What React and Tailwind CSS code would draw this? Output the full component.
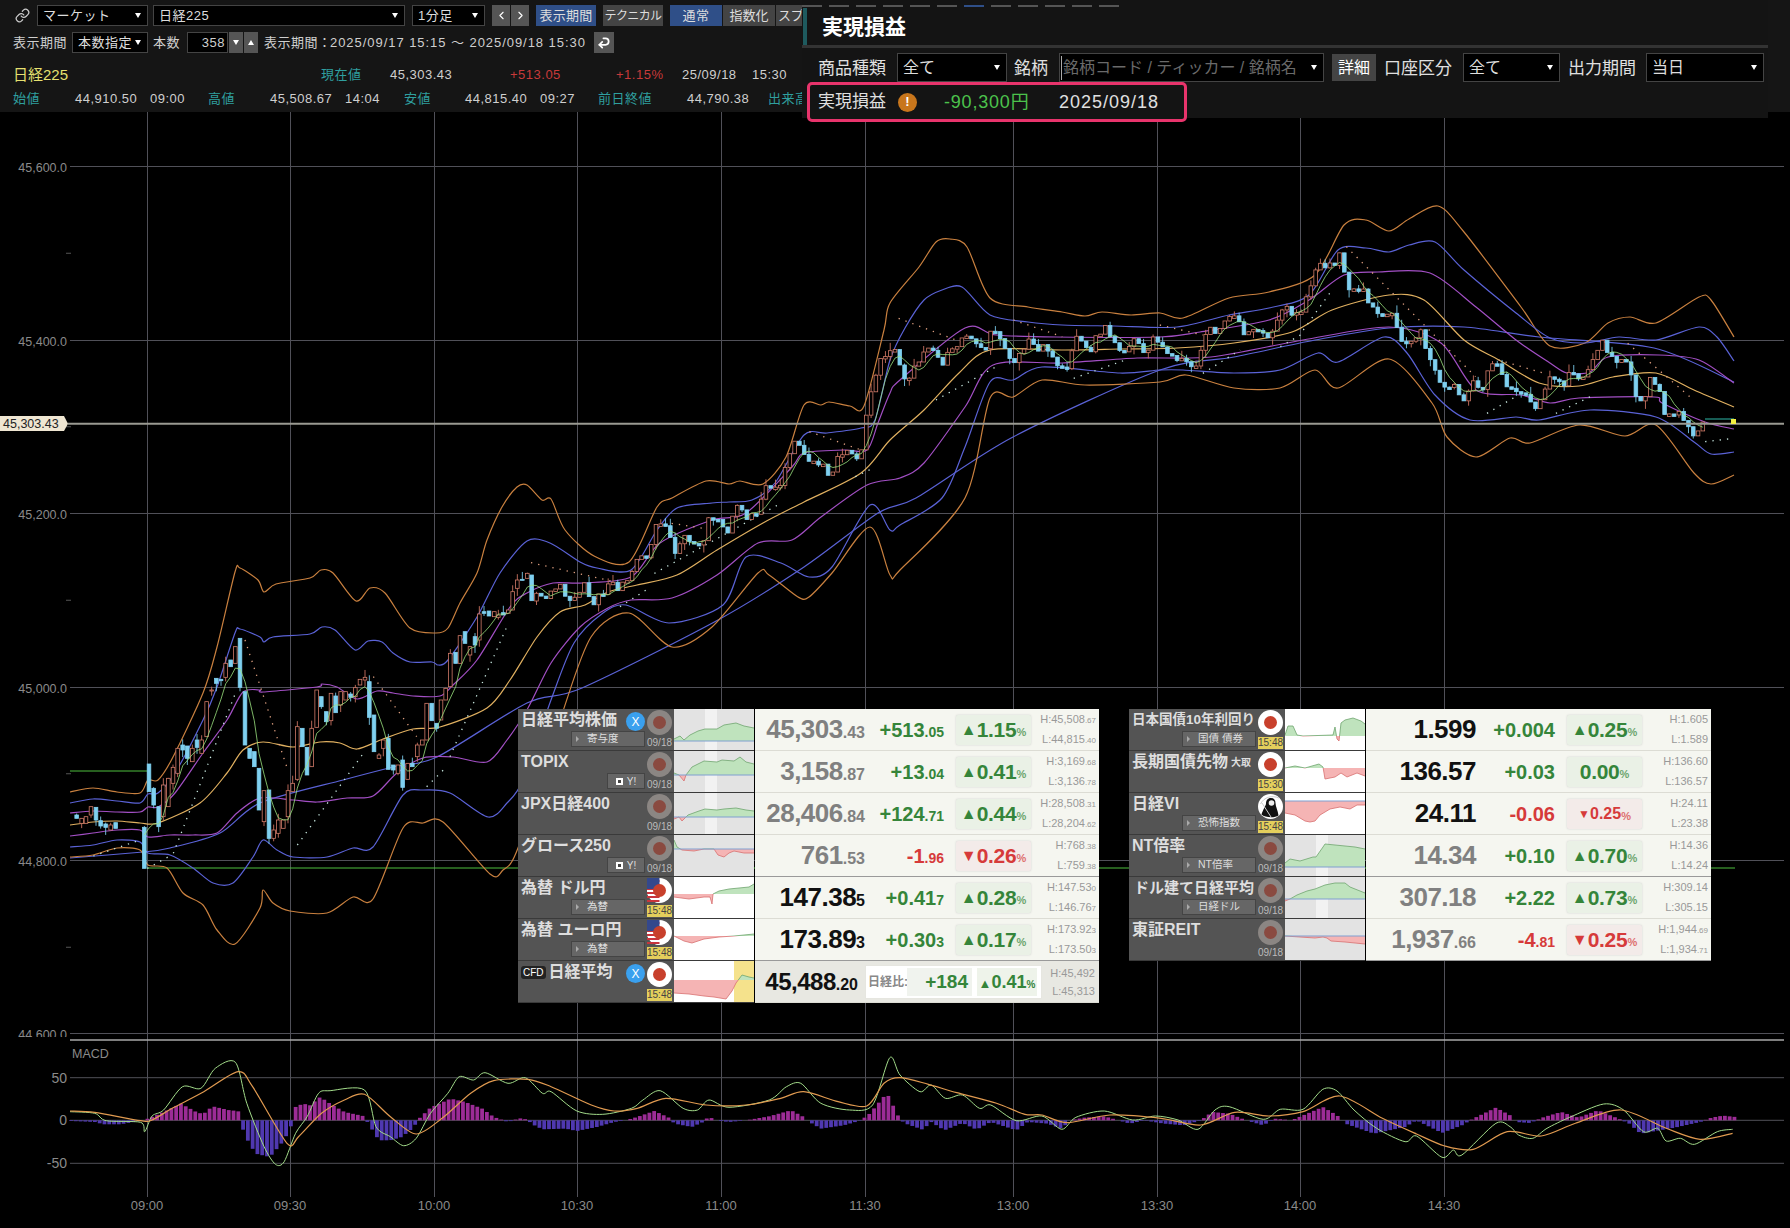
import React from "react";
import { Link, Undo2, ChevronLeft, ChevronRight } from "lucide-react";

const z8 = (x, y) => [60 + x / 3, 540 + y / 3];
const z6 = (x, y) => [x / 1.742, 280 + y / 3];
const z7 = (x, y) => [890 + x / 1.742, 200 + y / 3];
const z5 = (x, y) => [x / 1.742, 1030 + y / 3];
const z9 = (x, y) => [900 + x / 1.762, 1030 + y / 3];

const parse = (s) => s.trim().split(/\s+/).map((a) => a.split(",").map(Number));
const smooth = (p) => {
  let d = `M${p[0][0].toFixed(1)} ${p[0][1].toFixed(1)}`;
  for (let i = 0; i < p.length - 1; i++) {
    const a = p[i - 1] || p[i], b = p[i], c = p[i + 1], e = p[i + 2] || c;
    d += `C${(b[0] + (c[0] - a[0]) / 7).toFixed(1)} ${(b[1] + (c[1] - a[1]) / 7).toFixed(1)} ${(c[0] - (e[0] - b[0]) / 7).toFixed(1)} ${(c[1] - (e[1] - b[1]) / 7).toFixed(1)} ${c[0].toFixed(1)} ${c[1].toFixed(1)}`;
  }
  return d;
};
const interp = (pts, x) => {
  if (x <= pts[0][0]) return pts[0][1];
  for (let i = 0; i < pts.length - 1; i++) {
    if (x <= pts[i + 1][0]) {
      const t = (x - pts[i][0]) / (pts[i + 1][0] - pts[i][0] || 1);
      return pts[i][1] + t * (pts[i + 1][1] - pts[i][1]);
    }
  }
  return pts[pts.length - 1][1];
};
let seed = 12345;
const rnd = () => {
  seed = (seed * 1664525 + 1013904223) % 4294967296;
  return seed / 4294967296;
};

const U3 = "70,792 93,788 117,792 140,793 148,780 158,780 173,757 203,693 217,647 235,572 240,568 258,580 264,592 276,584 310,578 321,570 333,573 356,601 370,588 385,593 410,628 436,633 448,628 460,603 477,573 487,540 502,507 517,487 527,485 542,500 551,499 565,530 594,556 629,562 657,507 672,498 706,481 729,484 740,481 763,484 786,457 804,405 821,405 829,402 850,406 864,406 884,330 890,303 919,267 936,242 950,239 967,247 990,298 1028,307 1062,312 1085,316 1102,312 1131,315 1160,313 1183,318 1229,298 1269,292 1315,275 1344,225 1366,220 1389,231 1409,219 1438,206 1464,232 1521,307 1550,346 1585,343 1608,323 1630,317 1656,323 1699,297 1711,300 1734,337";
const U2 = "70,803 93,799 117,801 140,803 148,794 158,793 175,773 203,720 217,687 235,633 240,629 260,637 264,642 273,637 310,634 322,627 335,630 355,650 368,641 382,642 393,653 410,662 432,662 438,665 448,660 477,617 500,573 527,541 550,543 580,562 597,568 631,570 657,530 677,508 712,503 729,502 752,500 775,483 804,435 827,433 861,428 875,420 890,360 905,328 924,300 942,290 962,287 990,315 1028,322 1062,325 1114,326 1177,327 1229,315 1269,308 1309,295 1338,250 1366,248 1389,252 1409,245 1435,242 1464,270 1516,313 1550,338 1585,343 1619,337 1656,340 1699,327 1717,337 1734,361";
const U1 = "70,813 93,811 117,812 140,812 148,807 158,807 175,793 203,753 227,720 243,692 260,690 263,692 317,687 322,684 337,687 357,699 377,691 393,693 413,696 440,696 453,685 477,660 510,607 527,593 553,583 582,583 631,577 660,543 712,520 746,513 792,467 804,453 844,450 867,450 878,423 890,393 900,380 965,328 996,335 1056,337 1160,337 1200,332 1269,320 1309,300 1344,275 1378,272 1430,273 1476,307 1516,340 1550,363 1567,373 1590,372 1608,357 1659,355 1699,360 1734,383";
const MID = "70,825 93,822 117,821 140,823 158,823 200,803 227,773 243,750 263,742 293,747 320,742 340,743 357,749 383,739 413,729 440,727 487,708 510,680 537,637 560,612 585,605 608,592 637,585 677,575 717,550 763,523 804,502 861,473 890,440 924,410 959,373 990,350 1062,350 1120,349 1177,348 1234,343 1292,332 1332,310 1389,295 1424,300 1464,340 1499,360 1539,383 1579,386 1613,377 1656,373 1694,390 1734,407";
const L1 = "70,836 93,833 117,830 140,830 148,837 170,835 193,835 217,833 237,813 260,798 293,800 317,802 347,798 373,796 397,773 423,758 453,757 487,762 507,740 528,708 551,663 580,627 608,608 631,600 672,598 717,575 758,543 792,540 821,517 867,485 900,478 924,463 965,407 993,365 1062,363 1137,358 1211,357 1303,340 1389,327 1441,343 1476,390 1521,395 1550,403 1579,398 1654,397 1662,403 1705,422 1734,429";
const L2 = "70,847 93,845 117,840 140,842 148,853 170,855 193,868 213,883 233,883 253,857 263,840 277,850 293,857 327,857 353,848 373,847 403,795 423,790 450,793 488,817 507,803 523,780 551,700 574,643 603,613 626,605 669,623 723,605 746,557 781,563 809,577 832,567 870,505 890,530 900,525 942,498 965,447 990,382 1013,380 1042,367 1120,373 1160,370 1183,370 1234,373 1280,370 1318,353 1338,362 1384,337 1407,353 1435,395 1470,420 1516,417 1539,420 1590,410 1656,417 1694,442 1711,454 1734,452";
const L3 = "70,857 93,855 117,848 140,850 148,865 167,868 183,893 203,905 217,930 235,944 260,908 263,890 273,903 290,911 327,913 353,897 373,899 403,828 423,823 443,822 490,874 503,870 518,848 560,720 591,637 629,613 672,647 712,627 758,573 769,575 798,597 809,597 832,573 870,527 890,575 900,570 965,498 990,398 1013,397 1042,380 1085,385 1160,382 1186,375 1234,388 1280,388 1315,370 1338,388 1389,359 1432,403 1447,437 1476,457 1510,438 1530,443 1579,425 1625,436 1656,425 1694,473 1711,484 1734,475";
const SLOW = "70,858 143,852 170,848 220,833 260,803 343,780 393,767 437,757 527,703 582,688 718,620 804,567 878,513 916,498 1013,437 1160,370 1234,357 1315,340 1389,328 1464,327 1539,337 1654,348 1734,382";

const explicit = [[50,825,835,"d"],[65,835,850,"u"],[78,830,850,"u"],[93,800,825,"u"],[108,802,840,"d"],[122,842,858,"d"],[137,852,862,"d"],[152,855,870,"u"],[167,848,865,"d"],[253,862,985,"d"],[267,672,755,"d"],[281,745,795,"d"],[296,800,860,"d"],[310,735,830,"u"],[325,715,800,"u"],[339,682,730,"u"],[353,625,700,"u"],[368,615,630,"d"],[382,618,655,"d"],[397,625,665,"u"],[411,600,622,"d"],[425,600,640,"u"],[440,485,590,"u"],[455,450,453,"u"],[469,415,430,"d"],[483,418,422,"d"],[497,370,412,"u"],[512,360,380,"d"],[526,320,370,"u"],[540,295,442,"d"],[555,455,615,"d"],[569,625,655,"d"],[583,635,680,"d"],[597,685,810,"d"],[612,752,845,"u"],[627,750,895,"d"],[641,870,895,"u"],[655,840,880,"u"],[670,840,865,"u"],[684,752,830,"u"],[698,730,755,"u"],[712,560,718,"u"],[727,565,620,"d"],[741,622,705,"d"],[755,565,680,"u"],[770,450,562,"u"],[784,470,500,"d"],[799,515,545,"d"],[813,460,542,"u"],[827,468,518,"d"],[842,455,495,"u"],[857,455,480,"u"],[872,462,472,"d"],[886,443,470,"u"],[900,418,435,"u"],[915,412,420,"u"],[928,425,532,"d"],[942,525,635,"d"],[957,645,655,"u"],[970,600,625,"u"],[985,595,688,"d"],[1000,675,690,"d"],[1014,675,700,"u"],[1028,660,742,"d"],[1043,670,718,"u"],[1057,670,680,"d"],[1072,615,650,"u"],[1087,600,615,"u"],[1100,490,600,"u"],[1115,490,542,"d"],[1130,550,565,"d"],[1143,480,540,"u"],[1157,445,480,"u"],[1171,340,440,"u"],[1187,337,370,"d"],[1200,287,370,"u"],[1215,275,310,"d"],[1230,320,345,"u"],[1245,290,315,"d"],[1258,222,300,"u"],[1272,215,220,"d"],[1287,213,228,"d"],[1303,215,230,"u"],[1315,225,232,"u"],[1330,218,225,"d"],[1345,210,220,"u"],[1358,155,210,"u"],[1372,120,145,"u"],[1387,118,121,"d"],[1402,100,115,"u"],[1415,105,182,"d"]];

const closeKeys = [
  ...parse("532,601 543,595 554,590 574,595 585,593 603,595 623,577 631,573 640,557 649,550 657,525 666,532 676,545 692,547 712,522 726,525 738,508 746,517 758,505 769,487 778,483 795,445 803,447 815,467 832,465 861,447 873,393 881,347"),
  ...[[5,460],[20,520],[50,490],[75,420],[95,500],[115,420],[135,400],[150,460],[175,395],[195,430],[215,485],[250,420],[270,440],[295,510],[325,435],[345,425],[370,405],[410,445],[440,425],[475,440],[495,460],[512,490],[530,495],[545,430],[570,380],[595,345],[605,375],[640,400],[655,420],[680,330],[700,350],[715,330],[745,230],[755,170],[770,190],[785,190],[795,250],[820,280],[830,310],[850,340],[870,350],[890,400],[905,440],[925,415],[940,470],[955,530],[965,590],[985,540],[997,600],[1015,570],[1045,510],[1068,515],[1088,565],[1100,600],[1120,610],[1145,560],[1170,525],[1195,540],[1220,490],[1240,440],[1262,455],[1285,500],[1295,545],[1305,590],[1330,555],[1345,600],[1360,650],[1380,650],[1395,690],[1410,680],[1420,660]].map(([x, y]) => z7(x, y)),
];

const candles = [];
explicit.forEach(([x, t, b, dir]) => {
  const [rx, ry1] = z8(x, t);
  const ry2 = 540 + b / 3;
  candles.push({ x: rx, top: ry1, bot: ry2, up: dir === "u", close: dir === "u" ? ry1 : ry2 });
});
{
  let prev = interp(closeKeys, 532);
  let i = 0;
  for (let x = 536.5; x < 1706; x += 4.78) {
    const c = interp(closeKeys, x) + Math.sin(i * 1.15) * 6 + (rnd() - 0.5) * 11;
    const up = c < prev;
    let top = Math.min(c, prev), bot = Math.max(c, prev);
    if (bot - top < 2.5) bot = top + 2.5;
    candles.push({ x, top, bot, up, close: c });
    prev = c;
    i++;
  }
}
candles.forEach((c) => {
  c.wt = c.top - (rnd() < 0.45 ? rnd() * 8 : 0);
  c.wb = c.bot + (rnd() < 0.45 ? rnd() * 8 : 0);
});
const ma = candles.map((c, i) => {
  const s = candles.slice(Math.max(0, i - 4), i + 1);
  return [c.x, s.reduce((a, b) => a + b.close, 0) / s.length];
});

const sar = [
  ["w", z8(100, 948), z8(240, 900)], ["w", z8(262, 985), z8(335, 945)], ["w", z8(340, 940), z8(530, 450)], ["w", z8(712, 915), z8(910, 640)],
  ["o", z8(555, 300), z8(680, 680)], ["o", z8(940, 410), z8(1070, 590)], ["w", z8(1100, 740), z8(1160, 680)], ["w", z8(1170, 650), z8(1345, 250)],
  ["o", z6(925, 848), z6(1070, 905)], ["w", z6(1080, 980), z6(1130, 925)], ["w", z6(1140, 880), z6(1360, 670)], ["o", z6(1170, 730), z6(1225, 745)],
  ["o", z6(1410, 455), z6(1500, 510)], ["w", z6(1490, 590), z6(1520, 565)], ["o", z7(15, 355), z7(130, 430)], ["o", z7(215, 360), z7(300, 410)],
  ["w", z7(80, 600), z7(185, 500)], ["w", z7(320, 535), z7(410, 480)], ["o", z7(470, 375), z7(545, 405)], ["w", z7(545, 520), z7(610, 450)],
  ["w", z7(680, 440), z7(720, 400)], ["w", z7(720, 390), z7(770, 270)], ["o", z7(795, 140), z7(1020, 530)], ["o", z7(1060, 480), z7(1140, 520)],
  ["w", z7(1040, 640), z7(1090, 590)], ["w", z7(1160, 640), z7(1220, 590)], ["o", z7(1285, 430), z7(1400, 600)], ["w", z7(1420, 725), z7(1470, 715)],
];

const macdG = [
  ...[[122,245],[165,250],[185,272],[245,277],[252,305],[265,258],[285,240],[318,170],[350,175],[375,115],[410,97],[430,220],[460,350],[480,403],[495,395],[515,310],[535,260],[555,190],[575,182],[635,180],[655,290],[680,320],[703,347],[725,325],[750,250],[780,190],[800,140],[825,150],[845,128],[885,160],[915,143],[945,190],[960,185],[1005,243],[1050,253],[1100,235],[1120,210],[1150,182],[1190,235],[1215,240],[1235,210],[1270,232],[1340,210],[1370,170],[1395,160],[1430,220],[1480,240],[1520,225],[1550,83]].map(([x, y]) => z5(x, y)),
  ...[[0,135],[35,185],[55,165],[80,205],[110,195],[140,235],[160,225],[205,272],[250,258],[285,298],[310,262],[360,243],[410,270],[450,258],[490,270],[525,298],[555,240],[580,230],[640,268],[670,238],[710,238],[745,178],[770,183],[800,240],[840,295],[890,335],[910,318],[955,382],[975,360],[990,375],[1050,280],[1075,290],[1090,315],[1115,325],[1140,295],[1180,262],[1240,222],[1275,240],[1310,305],[1335,295],[1350,333],[1375,325],[1400,343],[1440,305],[1467,298]].map(([x, y]) => z9(x, y)),
];
const macdO = [
  ...[[122,243],[165,247],[245,272],[265,270],[300,235],[355,185],[415,125],[440,170],[500,340],[520,320],[560,250],[600,210],[635,193],[680,260],[725,312],[770,265],[820,190],[860,152],[920,148],[960,170],[1030,225],[1070,243],[1110,235],[1160,205],[1230,225],[1300,225],[1360,205],[1400,185],[1460,215],[1510,228],[1540,160]].map(([x, y]) => z5(x, y)),
  ...[[0,143],[50,163],[100,188],[170,220],[220,253],[250,255],[295,278],[370,255],[460,265],[530,285],[590,247],[650,258],[710,245],[775,198],[850,265],[910,312],[960,348],[1010,358],[1070,305],[1130,318],[1190,280],[1270,240],[1350,295],[1410,328],[1467,310]].map(([x, y]) => z9(x, y)),
];
const histKeys = [
  ...[[122,-2],[165,-5],[180,-12],[210,-12],[240,-3],[250,0],[265,10],[285,25],[315,50],[345,22],[355,20],[370,42],[400,30],[415,28],[418,-2],[428,-50],[445,-100],[470,-110],[490,-70],[505,-30],[515,40],[528,50],[540,45],[558,70],[575,50],[600,25],[635,12],[640,-5],[660,-60],[680,-60],[700,-50],[720,-22],[730,5],[750,38],[785,65],[810,55],[840,35],[860,10],[885,-5],[905,6],[920,2],[925,-10],[945,-27],[985,-25],[1005,-32],[1040,-20],[1070,-5],[1090,0],[1110,10],[1140,28],[1165,8],[1175,-10],[1205,-20],[1225,-5],[1235,12],[1245,0],[1270,-5],[1300,0],[1340,12],[1378,30],[1400,10],[1410,-5],[1430,-25],[1470,-15],[1500,0],[1515,20],[1545,82]].map(([x, v]) => [x / 1.742, v / 3]),
  ...[[0,2],[10,-10],[40,-28],[55,-5],[78,-30],[110,-8],[135,-28],[160,-5],[205,-30],[225,-5],[260,-10],[285,-25],[300,0],[325,8],[360,12],[385,0],[405,-10],[430,0],[465,-10],[500,-15],[530,0],[550,25],[580,20],[610,0],[640,-15],[660,5],[690,0],[745,40],[770,15],[785,-10],[835,-40],[890,-20],[910,0],[955,-38],[990,-15],[1010,5],[1050,38],[1075,15],[1085,-5],[1110,-8],[1135,10],[1165,25],[1195,8],[1230,30],[1270,2],[1285,-10],[1305,-40],[1365,-22],[1410,-5],[1430,8],[1450,14],[1472,10]].map(([x, v]) => [900 + x / 1.762, v / 3]),
];
const hist = [];
for (let x = 71; x < 1736; x += 4.78) hist.push([x, interp(histKeys, x)]);

const GRIDX = [147, 290, 434, 577, 721, 865, 1013, 1157, 1300, 1444];
const TIMES = ["09:00", "09:30", "10:00", "10:30", "11:00", "11:30", "13:00", "13:30", "14:00", "14:30"];
const PRICES = [["45,600.0", 166.5], ["45,400.0", 340.5], ["45,200.0", 513.5], ["45,000.0", 687.5], ["44,800.0", 860.5], ["44,600.0", 1033.5]];

function MainChart() {
  const axis = { fontFamily: '"Liberation Sans", sans-serif', fontSize: 12.5, fill: "#8a8a8a" };
  return (
    <svg viewBox="0 112 1790 1116" className="block w-[1790px] h-[1116px] bg-black">
      <g shapeRendering="crispEdges">
        {GRIDX.map((x) => (<line key={x} x1={x + 0.5} x2={x + 0.5} y1={112} y2={1197} stroke="#505058" />))}
      </g>
      {PRICES.map(([t, y]) => (
        <g key={t}>
          <line x1={70} x2={1784} y1={y} y2={y} stroke="#505058" shapeRendering="crispEdges" />
          <text x={67} y={y + 5} textAnchor="end" {...axis}>{t}</text>
        </g>
      ))}
      {Array.from({ length: 10 }).map((_, i) => {
        const y = 166.5 + 86.75 * i;
        return i % 2 === 1 ? <line key={i} x1={66} x2={71} y1={y} y2={y} stroke="#555" /> : null;
      })}
      <rect x={0} y={1037} width={70} height={191} fill="#000" />
      <line x1={70} x2={147} y1={771} y2={771} stroke="#4fbf3f" />
      <line x1={147} x2={1735} y1={868} y2={868} stroke="#4fbf3f" />
      {[[SLOW, "#5a62d6"], [L3, "#c9803f"], [U3, "#c9803f"], [L2, "#5a62d6"], [U2, "#5a62d6"], [L1, "#a24fc4"], [U1, "#a24fc4"], [MID, "#e0b060"]].map(([s, c], i) => (
        <path key={i} d={smooth(parse(s))} fill="none" stroke={c} strokeWidth={1.2} />
      ))}
      {sar.map(([k, a, b], i) => (
        <line key={i} x1={a[0]} y1={a[1]} x2={b[0]} y2={b[1]} stroke={k === "w" ? "#c8e8e0" : "#e0a080"} strokeWidth={1.3} strokeDasharray="1.3 6" />
      ))}
      {candles.map((c, i) => (
        <g key={i}>
          <line x1={c.x} x2={c.x} y1={c.wt} y2={c.wb} stroke={c.up ? "#c87060" : "#78c8e8"} strokeWidth={0.9} />
          <rect x={c.x - 1.8} y={c.top} width={3.6} height={c.bot - c.top} fill={c.up ? "#000" : "#7fd0f0"} stroke={c.up ? "#d07a68" : "#7fd0f0"} strokeWidth={0.8} />
        </g>
      ))}
      <path d={`M${ma.slice(9).map((p) => p[0].toFixed(1) + " " + p[1].toFixed(1)).join("L")}`} fill="none" stroke="#9be27f" strokeWidth={0.8} />
      <line x1={1705} x2={1734} y1={419} y2={419} stroke="#2fb8a8" />
      <line x1={68} x2={1784} y1={423.7} y2={423.7} stroke="#9a9a92" strokeWidth={2} />
      <rect x={1731} y={419} width={5} height={5} fill="#f4f040" />
      <polygon points="0,416 64,416 68,423.7 64,431 0,431" fill="#efe6d2" />
      <text x={3} y={428} fontFamily='"Liberation Sans", sans-serif' fontSize={12.5} fill="#222">45,303.43</text>

      <line x1={70} x2={1784} y1={1040} y2={1040} stroke="#a8a8a8" strokeWidth={1.5} />
      <text x={72} y={1058} {...axis}>MACD</text>
      {[["50", 1077.7], ["0", 1120.3], ["-50", 1163.3]].map(([t, y]) => (
        <g key={t}>
          <line x1={70} x2={1784} y1={y} y2={y} stroke="#505058" />
          <text x={67} y={y + 5} textAnchor="end" {...axis} fontSize={14}>{t}</text>
        </g>
      ))}
      {hist.map(([x, v], i) =>
        Math.abs(v) < 0.4 ? null : (
          <rect key={i} x={x - 1.9} y={v > 0 ? 1120.3 - v : 1120.3} width={3.8} height={Math.abs(v)} fill={v > 0 ? "#9c2c96" : "#4f38b0"} />
        )
      )}
      <path d={smooth(macdG)} fill="none" stroke="#a3dc8a" strokeWidth={1} />
      <path d={smooth(macdO)} fill="none" stroke="#e09a50" strokeWidth={1.2} />
      {TIMES.map((t, i) => (
        <text key={t} x={GRIDX[i]} y={1210} textAnchor="middle" {...axis} fontSize={13}>{t}</text>
      ))}
    </svg>
  );
}

function Caret({ className = "" }) {
  return <span className={`inline-block w-0 h-0 border-x-[3.5px] border-x-transparent border-t-[5px] border-t-white ${className}`} />;
}
function Sel({ w, text, cls = "h-[21px] text-[13px]", placeholder }) {
  return (
    <div className={`flex items-center justify-between bg-black border border-[#444] pl-[5px] pr-[6px] shrink-0 ${w} ${cls}`}>
      <span className={`truncate ${placeholder ? "text-[#6a6a6a] border-l border-[#aaa] pl-[1px] -ml-[4px]" : "text-[#ddd]"}`}>{text}</span>
      <Caret className="shrink-0" />
    </div>
  );
}
function Btn({ w, children, blue, cls = "text-[13px] tracking-[0.5px]" }) {
  return <div className={`flex items-center justify-center h-[21px] text-[#ddd] shrink-0 whitespace-nowrap ${w} ${cls} ${blue ? "bg-[#2f4f88]" : "bg-[#444]"}`}>{children}</div>;
}
function Cell({ w, c = "text-[#cfcfcf]", children }) {
  return <div className={`shrink-0 whitespace-nowrap ${w} ${c}`}>{children}</div>;
}

function Header() {
  const teal = "text-[#2f9f9f]";
  return (
    <div className="h-[112px] bg-[#151515] text-[13px] text-[#cfcfcf] tracking-[0.5px] pt-[5px]">
      <div className="flex items-center h-[21px] pl-[15px]">
        <Link size={15} className="text-[#ccc] w-[15px] mr-[7px] shrink-0" />
        <Sel w="w-[111px]" text="マーケット" />
        <div className="w-[5px]" />
        <Sel w="w-[252px]" text="日経225" />
        <div className="w-[7px]" />
        <Sel w="w-[73px]" text="1分足" />
        <div className="w-[7px]" />
        <div className="flex gap-[1px] shrink-0">
          <div className="w-[18px] h-[21px] bg-[#555] flex items-center justify-center"><ChevronLeft size={13} className="text-white" /></div>
          <div className="w-[18px] h-[21px] bg-[#555] flex items-center justify-center"><ChevronRight size={13} className="text-white" /></div>
        </div>
        <div className="w-[7px]" />
        <Btn w="w-[60px]" blue cls="text-[13px] tracking-[0.2px]">表示期間</Btn>
        <div className="w-[7px]" />
        <Btn w="w-[60px]" cls="text-[12px] tracking-[-0.6px]">テクニカル</Btn>
        <div className="w-[7px]" />
        <Btn w="w-[52px]" blue>通常</Btn>
        <div className="w-[1px]" />
        <Btn w="w-[52px]" cls="text-[13px] tracking-normal">指数化</Btn>
        <div className="w-[1px]" />
        <Btn w="w-[70px]" cls="text-[13px] tracking-[-0.5px] justify-start! pl-[2px]">スプレッド</Btn>
      </div>
      <div className="flex items-center h-[21px] mt-[6px] pl-[13px] whitespace-nowrap">
        <Cell w="w-[59px]">表示期間</Cell>
        <Sel w="w-[76px]" text="本数指定" />
        <Cell w="w-[39px] pl-[5px]">本数</Cell>
        <div className="w-[41px] h-[21px] bg-black border border-[#444] text-right pr-[2px] leading-[19px] shrink-0">358</div>
        <div className="w-[14px] h-[21px] bg-[#555] ml-[1px] flex items-center justify-center shrink-0"><Caret /></div>
        <div className="w-[14px] h-[21px] bg-[#555] ml-[1px] flex items-center justify-center shrink-0"><Caret className="rotate-180" /></div>
        <Cell w="w-[72px] pl-[6px]">表示期間：</Cell>
        <Cell w="w-[264px]" c="text-[#cfcfcf] tracking-[0.95px]">2025/09/17 15:15 ～ 2025/09/18 15:30</Cell>
        <div className="w-[20px] h-[21px] bg-[#555] flex items-center justify-center shrink-0"><Undo2 size={14} strokeWidth={3} className="text-white rotate-180 -scale-x-100" /></div>
      </div>
      <div className="flex items-center h-[20px] mt-[12px] pl-[13px]">
        <Cell w="w-[308px]" c="text-[#e6e070] text-[15px] tracking-normal">日経225</Cell>
        <Cell w="w-[69px]" c={teal}>現在値</Cell>
        <Cell w="w-[120px]">45,303.43</Cell>
        <Cell w="w-[106px]" c="text-[#c83a3a]">+513.05</Cell>
        <Cell w="w-[66px]" c="text-[#c83a3a]">+1.15%</Cell>
        <Cell w="w-[70px]">25/09/18</Cell>
        <Cell w="w-[40px]">15:30</Cell>
      </div>
      <div className="flex items-center h-[20px] mt-[4px] pl-[13px]">
        <Cell w="w-[62px]" c={teal}>始値</Cell>
        <Cell w="w-[75px]">44,910.50</Cell>
        <Cell w="w-[58px]">09:00</Cell>
        <Cell w="w-[62px]" c={teal}>高値</Cell>
        <Cell w="w-[75px]">45,508.67</Cell>
        <Cell w="w-[59px]">14:04</Cell>
        <Cell w="w-[61px]" c={teal}>安値</Cell>
        <Cell w="w-[75px]">44,815.40</Cell>
        <Cell w="w-[58px]">09:27</Cell>
        <Cell w="w-[89px]" c={teal}>前日終値</Cell>
        <Cell w="w-[81px]">44,790.38</Cell>
        <Cell w="w-[40px]" c={teal}>出来高</Cell>
      </div>
    </div>
  );
}

function PLPanel() {
  const big = "h-[29px] text-[16px]";
  const Lab = ({ w, ml, children }) => <div className={`shrink-0 whitespace-nowrap text-[17px] text-[#e0e0e0] pt-[3px] ${w} ${ml}`}>{children}</div>;
  return (
    <div className="absolute top-0 left-[802px] w-[966px] h-[118px] bg-[#141414]">
      <div className="absolute top-[5px] left-0 flex gap-[7px]">
        {Array.from({ length: 13 }).map((_, i) => (
          <div key={i} className={`w-[20px] h-[1.5px] ${i === 6 ? "bg-[#2f4f88]" : i === 11 ? "hidden" : "bg-[#555]"}`} />
        ))}
      </div>
      <div className="absolute left-[1px] top-[8px] w-[4px] h-[37px] bg-[#1e5a5e]" />
      <div className="h-[48px] pl-[20px] pt-[12px] border-b-[3px] border-[#333] text-[21px] leading-[30px] font-bold text-white">実現損益</div>
      <div className="flex items-center mt-[5px] h-[29px]">
        <Lab w="w-[71px]" ml="ml-[16px]">商品種類</Lab>
        <div className="w-[8px]" />
        <Sel w="w-[110px]" text="全て" cls={big} />
        <Lab w="w-[36px]" ml="ml-[7px]">銘柄</Lab>
        <div className="w-[9px]" />
        <Sel w="w-[265px]" text="銘柄コード / ティッカー / 銘柄名" placeholder cls="h-[29px] text-[16px]" />
        <div className="ml-[8px] w-[44px] h-[27px] bg-[#444] text-[16px] text-white flex items-center justify-center shrink-0">詳細</div>
        <Lab w="w-[71px]" ml="ml-[8px]">口座区分</Lab>
        <div className="w-[8px]" />
        <Sel w="w-[97px]" text="全て" cls={big} />
        <Lab w="w-[70px]" ml="ml-[8px]">出力期間</Lab>
        <div className="w-[8px]" />
        <Sel w="w-[118px]" text="当日" cls={big} />
      </div>
      <div className="flex items-center ml-[5px] w-[380px] h-[40px] border-[3px] border-[#e8346c] rounded-[5px] bg-[#141414] pl-[8px] text-[#e0e0e0]">
        <div className="w-[80px] text-[17px] shrink-0">実現損益</div>
        <div className="w-[19px] h-[19px] rounded-full bg-[#c8761c] text-white text-[13px] font-bold flex items-center justify-center shrink-0">!</div>
        <div className="ml-[27px] w-[115px] text-[18px] tracking-[0.8px] text-[#4cc24c] shrink-0 whitespace-nowrap">-90,300円</div>
        <div className="text-[18px] tracking-[1px] whitespace-nowrap">2025/09/18</div>
      </div>
    </div>
  );
}

function Marker({ kind, id }) {
  if (kind === "flag") {
    return (
      <svg viewBox="0 0 25 25" className="w-[25px] h-[25px] block">
        <defs><clipPath id={`${id}f`}><rect x="0" y="0" width="12.5" height="25" /></clipPath></defs>
        <circle cx="12.5" cy="12.5" r="12.5" fill="#fff" />
        <g clipPath={`url(#${id}f)`}>
          <circle cx="12.5" cy="12.5" r="12.5" fill="#fff" />
          {[2, 6, 10, 14, 18, 22].map((y) => (<rect key={y} x="0" y={y} width="13" height="2" fill="#c8343c" />))}
          <rect x="0" y="0" width="13" height="11" fill="#34488c" />
        </g>
        <circle cx="12.5" cy="12.5" r="6.5" fill="#c8402c" />
      </svg>
    );
  }
  if (kind === "reaper") {
    return (
      <svg viewBox="0 0 25 25" className="w-[25px] h-[25px] block">
        <circle cx="12.5" cy="12.5" r="12.5" fill="#fff" />
        <path d="M13 4c-3.5 0-5 2.5-5 5.5 0 2-3.5 7-4.5 11 3 3 13 4 17 1-.5-5-3-9-3-12.5C17.500 6 16 4 13 4z" fill="#111" />
        <circle cx="13.500" cy="9" r="2.800" fill="#eee" />
        <path d="M2.500 10C6 3 14 1 21 4M4 9l9 14" stroke="#ccc" strokeWidth="1" fill="none" />
      </svg>
    );
  }
  const live = kind === "live";
  return (
    <div className={`w-[25px] h-[25px] rounded-full flex items-center justify-center ${live ? "bg-white" : "bg-[#8b8683]"}`}>
      <div className={`w-[13px] h-[13px] rounded-full ${live ? "bg-[#c8402c]" : "bg-[#8a4a40]"}`} />
    </div>
  );
}

function Spark({ id, live, base, pts, band, lunch }) {
  const p = pts.map((a) => a.join(",")).join(" ");
  const area = `0,${base} ${p} 80,${base}`;
  return (
    <svg viewBox="0 0 80 41" className={`block w-[80px] h-[41px] shrink-0 ${live ? "bg-white" : "bg-[#e3e3e3]"}`}>
      <defs>
        <clipPath id={`${id}a`}><rect x="0" y="0" width="80" height={base} /></clipPath>
        <clipPath id={`${id}b`}><rect x="0" y={base} width="80" height={41 - base} /></clipPath>
      </defs>
      {band && <rect x="60" y="0" width="20" height="41" fill="#f5e28c" />}
      {lunch && <rect x="31" y="0" width="12" height="41" fill="#f2f2f2" />}
      <polygon points={area} fill="#bfe3bd" clipPath={`url(#${id}a)`} />
      <polygon points={area} fill="#f5b4b4" clipPath={`url(#${id}b)`} />
      <polyline points={p} fill="none" stroke="#6fa46f" strokeWidth="0.8" clipPath={`url(#${id}a)`} />
      <polyline points={p} fill="none" stroke="#d87070" strokeWidth="0.8" clipPath={`url(#${id}b)`} />
      {!live && <line x1="0" x2="80" y1={base} y2={base} stroke="#7f9fd0" strokeWidth="1" />}
      {live && base < 10 && <line x1="0" x2="80" y1={base} y2={base} stroke="#7f9fd0" strokeWidth="1" />}
    </svg>
  );
}

const sp = (s) => parse(s);

function NameButton({ label, y }) {
  if (y) {
    return (
      <div className="self-end mr-[2px] w-[38px] h-[16px] bg-[#666] border border-[#444] flex items-center justify-center gap-[4px] text-[10px] text-[#ddd]">
        <span className="w-[7px] h-[7px] bg-white flex items-center justify-center"><span className="w-[3px] h-[3px] bg-[#444]" /></span>Y!
      </div>
    );
  }
  return (
    <div className="self-end mr-[2px] w-[74px] h-[16px] bg-[#666] border border-[#444] flex items-center text-[10.5px] text-[#ddd] pl-[4px] gap-[8px] whitespace-nowrap">
      <span className="w-0 h-0 border-y-[3px] border-y-transparent border-l-[3px] border-l-[#aaa]" />{label}
    </div>
  );
}

function Split({ a, b, m, s, c }) {
  return (
    <span className={c}>
      <span className={m}>{a}</span>
      <span className={s}>{b}</span>
    </span>
  );
}

function Row({ r, i, id }) {
  const green = "text-[#35853a]", red = "text-[#d63a3a]";
  const col = r.down ? red : green;
  const priceCol = r.live ? "text-[#111]" : "text-[#808080]";
  return (
    <div className="flex h-[42px]">
      <div className="flex w-[156px] h-[42px] bg-[#545454] border-b border-[#3a3a3a] shrink-0">
        <div className="flex-1 min-w-0 flex flex-col justify-between pb-[3px] pl-[3px] pt-[1px] relative">
          <div className={`flex items-center whitespace-nowrap font-bold text-[#dedede] h-[20px] ${r.nameCls || "text-[16px]"}`}>
            {r.cfd && <span className="bg-[#222] text-white text-[10px] rounded-[3px] px-[2px] mr-[3px] leading-[13px] font-normal">CFD</span>}
            {r.name}
            {r.sub && <span className="text-[10px] ml-[3px]">{r.sub}</span>}
          </div>
          {r.x && (
            <div className="absolute right-[2px] top-[3px] w-[19px] h-[19px] rounded-full bg-[#3aa0ee] text-white text-[12px] flex items-center justify-center">X</div>
          )}
          {r.btn && <NameButton label={r.btn} />}
          {r.y && <NameButton y />}
        </div>
        <div className="w-[25px] mr-[2px] pt-[1px] flex flex-col items-center shrink-0">
          <Marker kind={r.marker} id={id} />
          <div className={`mt-[2px] w-[25px] text-center text-[10px] leading-[12px] ${r.live ? "bg-[#e4cf5c] text-[#444]" : "text-[#bbb]"}`}>{r.date}</div>
        </div>
      </div>
      <div className="border-b border-[#3a3a3a] h-[42px] shrink-0">
        <Spark id={id} live={r.live} base={r.base} pts={sp(r.pts)} band={r.band} lunch={r.lunch} />
      </div>
      <div className={`flex-1 flex items-center ml-[1px] border-b ${i === 3 || i === 5 ? "border-[#9a9a9a]" : "border-[#dcdcd4]"} ${r.cfd ? "bg-[#e8e8e2]" : "bg-[#f5f6f0]"}`}>
        {r.cfd ? (
          <>
            <div className="w-[103px] text-right shrink-0 font-bold whitespace-nowrap"><Split a="45,488" b=".20" m="text-[24px] tracking-[-0.5px] text-[#111]" s="text-[16px] text-[#111]" /></div>
            <div className="ml-[7px] w-[177px] h-[34px] bg-white border border-[#e6e6e0] flex items-center shrink-0">
              <span className="text-[12px] text-[#888] pl-[2px] w-[41px] whitespace-nowrap font-bold">日経比:</span>
              <span className={`w-[65px] h-[28px] bg-[#f0f3ee] text-right pr-[4px] font-bold text-[19px] leading-[28px] ${green}`}>+184</span>
              <span className={`ml-[5px] w-[60px] h-[28px] bg-[#eef3ea] font-bold text-[18px] leading-[28px] text-center whitespace-nowrap ${green}`}><span className="text-[13px]">▲</span>0.41<span className="text-[10px]">%</span></span>
            </div>
            <div className="flex-1 text-right pr-[4px] text-[11px] text-[#999] leading-[12px] flex flex-col gap-[6px]">
              <span>H:45,492</span><span>L:45,313</span>
            </div>
          </>
        ) : (
          <>
            <div className="w-[110px] text-right shrink-0 font-bold whitespace-nowrap"><Split a={r.p[0]} b={r.p[1]} m={`text-[26px] tracking-[-0.5px] ${priceCol}`} s={`text-[16px] ${priceCol}`} /></div>
            <div className="w-[79px] text-right shrink-0 font-bold whitespace-nowrap"><Split a={r.ch[0]} b={r.ch[1]} c={col} m="text-[20px]" s="text-[14px]" /></div>
            <div className={`ml-[12px] w-[75px] h-[30px] rounded-[2px] shadow-[0_0_2px_#ccc] flex items-center justify-center font-bold shrink-0 whitespace-nowrap ${col} ${r.down ? "bg-[#f3ebe9]" : "bg-[#eaf1e6]"}`}>
              {r.arrow !== false && <span className={r.small ? "text-[12px]" : "text-[16px]"}>{r.down ? "▼" : "▲"}</span>}
              <span className={r.small ? "text-[16px]" : "text-[21px] leading-[24px] tracking-[-0.3px]"}>{r.pct}</span>
              <span className="text-[11px] opacity-70 pt-[6px]">%</span>
            </div>
            <div className="flex-1 text-right pr-[3px] text-[11px] text-[#999] leading-[12px] flex flex-col gap-[6px] whitespace-nowrap">
              <span>{r.h[0]}<span className="text-[8px]">{r.h[1]}</span></span>
              <span>{r.l[0]}<span className="text-[8px]">{r.l[1]}</span></span>
            </div>
          </>
        )}
      </div>
    </div>
  );
}

const T1 = [
  { name: "日経平均株価", x: true, btn: "寄与度", marker: "stale", date: "09/18", p: ["45,303", ".43"], ch: ["+513", ".05"], pct: "1.15", h: ["H:45,508", ".67"], l: ["L:44,815", ".40"], base: 32, lunch: true, pts: "0,30 6,27 10,31 16,26 24,22 31,20 43,20 50,16 62,14 70,17 80,19" },
  { name: "TOPIX", y: true, marker: "stale", date: "09/18", p: ["3,158", ".87"], ch: ["+13", ".04"], pct: "0.41", h: ["H:3,169", ".68"], l: ["L:3,136", ".78"], base: 24, lunch: true, pts: "0,22 5,24 10,30 12,24 18,16 30,10 43,11 48,9 60,10 66,6 72,11 80,13" },
  { name: "JPX日経400", marker: "stale", date: "09/18", p: ["28,406", ".84"], ch: ["+124", ".71"], pct: "0.44", h: ["H:28,508", ".31"], l: ["L:28,204", ".62"], base: 24, lunch: true, pts: "0,26 5,24 8,28 14,22 25,18 31,16 43,17 50,16 62,15 72,17 80,18" },
  { name: "グロース250", y: true, marker: "stale", date: "09/18", down: true, p: ["761", ".53"], ch: ["-1", ".96"], pct: "0.26", h: ["H:768", ".38"], l: ["L:759", ".38"], base: 14, pts: "0,5 3,12 8,15 20,16 30,14 40,14 44,20 50,22 55,18 60,16 70,18 80,18" },
  { name: "為替 ドル円", btn: "為替", marker: "flag", live: true, date: "15:48", p: ["147.38", "5"], ch: ["+0.41", "7"], pct: "0.28", h: ["H:147.53", "0"], l: ["L:146.76", "7"], base: 17, pts: "0,20 15,22 30,20 36,20 38,27 39,17 45,14 55,12 65,11 75,10 80,7" },
  { name: "為替 ユーロ円", btn: "為替", marker: "flag", live: true, date: "15:48", p: ["173.89", "3"], ch: ["+0.30", "3"], pct: "0.17", h: ["H:173.92", "3"], l: ["L:173.50", "3"], base: 17, pts: "0,17 10,22 18,24 30,20 45,18 60,17 80,15" },
  { name: "日経平均", cfd: true, x: true, marker: "live", live: true, date: "15:48", base: 19, band: true, pts: "0,32 15,33 30,35 40,36 52,38 58,30 62,22 68,14 75,16 80,17" },
];
const T2 = [
  { name: "日本国債10年利回り", nameCls: "text-[13.5px]", btn: "国債 債券", marker: "live", live: true, date: "15:48", p: ["1.599", ""], ch: ["+0.004", ""], pct: "0.25", h: ["H:1.605", ""], l: ["L:1.589", ""], base: 27, pts: "0,26 3,17 8,17 12,26 18,27 48,26 50,18 52,30 54,32 56,14 60,11 68,9 76,12 80,15" },
  { name: "長期国債先物", sub: "大取", marker: "live", live: true, date: "15:30", p: ["136.57", ""], ch: ["+0.03", ""], pct: "0.00", arrow: false, h: ["H:136.60", ""], l: ["L:136.57", ""], base: 17, pts: "0,17 10,15 20,17 34,13 38,16 40,28 50,26 56,22 62,26 72,22 80,25" },
  { name: "日経VI", btn: "恐怖指数", marker: "reaper", live: true, date: "15:48", down: true, small: true, p: ["24.11", ""], ch: ["-0.06", ""], pct: "0.25", h: ["H:24.11", ""], l: ["L:23.38", ""], base: 8, pts: "0,20 10,22 20,28 25,29 30,28 35,22 45,16 55,14 65,16 72,12 80,12" },
  { name: "NT倍率", btn: "NT倍率", marker: "stale", date: "09/18", p: ["14.34", ""], ch: ["+0.10", ""], pct: "0.70", h: ["H:14.36", ""], l: ["L:14.24", ""], base: 32, lunch: true, pts: "0,28 5,24 15,26 28,22 31,22 38,12 40,9 50,10 60,11 70,12 80,14" },
  { name: "ドル建て日経平均", nameCls: "text-[15px] pl-[2px]", btn: "日経ドル", marker: "stale", date: "09/18", p: ["307.18", ""], ch: ["+2.22", ""], pct: "0.73", h: ["H:309.14", ""], l: ["L:305.15", ""], base: 22, lunch: true, pts: "0,24 5,22 12,18 22,14 30,12 40,8 50,6 60,6 65,10 75,14 80,16" },
  { name: "東証REIT", marker: "stale", date: "09/18", down: true, p: ["1,937", ".66"], ch: ["-4", ".81"], pct: "0.25", h: ["H:1,944", ".69"], l: ["L:1,934", ".71"], base: 17, pts: "0,17 15,18 30,19 38,18 42,19 46,22 60,23 70,24 80,25" },
];

function Table({ rows, left, id, w }) {
  return (
    <div className={`absolute top-[709px] ${left} ${w} flex flex-col`}>
      {rows.map((r, i) => (<Row key={i} r={r} i={i} id={`${id}${i}`} />))}
    </div>
  );
}

export default function App() {
  return (
    <div className="relative w-[1790px] h-[1228px] bg-black overflow-hidden" style={{ fontFamily: '"Liberation Sans","Noto Sans CJK JP",sans-serif' }}>
      <Header />
      <MainChart />
      <PLPanel />
      <Table rows={T1} left="left-[518px]" w="w-[581px]" id="a" />
      <Table rows={T2} left="left-[1129px]" w="w-[582px]" id="b" />
    </div>
  );
}
